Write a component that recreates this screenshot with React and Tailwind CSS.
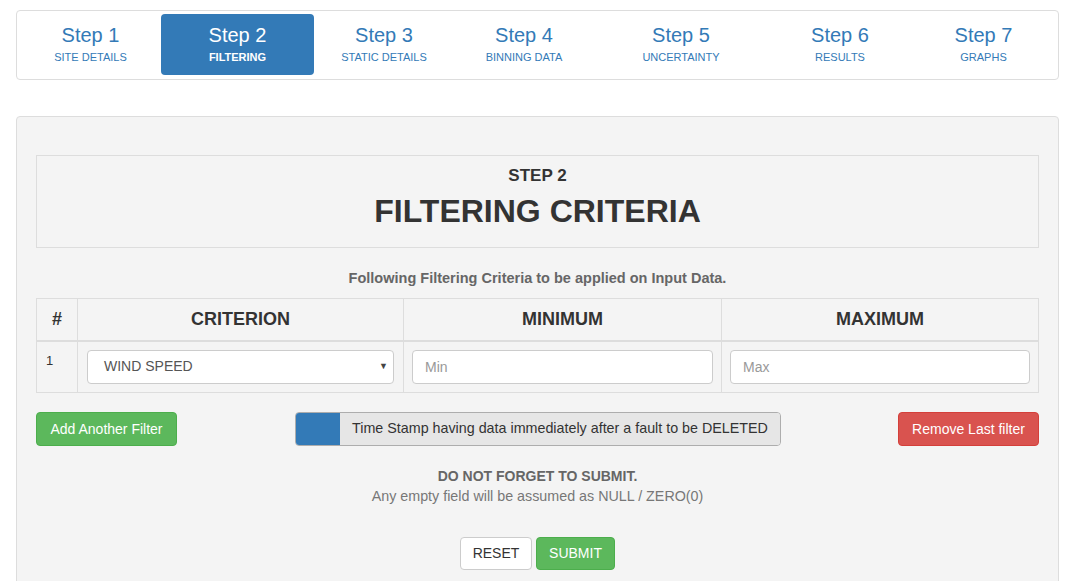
import React from 'react';

const steps = [
  { n: 1, label: 'SITE DETAILS', w: 'w-[141px]' },
  { n: 2, label: 'FILTERING', w: 'w-[153px]' },
  { n: 3, label: 'STATIC DETAILS', w: 'w-[140px]' },
  { n: 4, label: 'BINNING DATA', w: 'w-[140px]' },
  { n: 5, label: 'UNCERTAINTY', w: 'w-[174px]' },
  { n: 6, label: 'RESULTS', w: 'w-[144px]' },
  { n: 7, label: 'GRAPHS', w: 'flex-1' },
];

const StepNav = ({ active }) => (
  <div className="ml-4 mr-5 mt-[10px] flex h-[70px] rounded border border-[#ddd] bg-white px-[3px] pt-[3px] pb-[4px]">
    {steps.map((s) => {
      const isActive = s.n === active;
      return (
        <div
          key={s.n}
          className={`${s.w} flex flex-col items-center rounded pt-[8px] ${
            isActive ? 'bg-[#337ab7] text-white' : 'text-[#337ab7]'
          }`}
        >
          <div className="text-[20px] leading-[26px]">Step {s.n}</div>
          <div className={`text-[11px] leading-[14px] mt-[2px] ${isActive ? 'font-bold' : ''}`}>{s.label}</div>
        </div>
      );
    })}
  </div>
);

const App = () => {
  return (
    <div className="min-h-[581px] bg-white font-['Liberation_Sans',Arial,sans-serif] text-[#333] text-[14px]">
      <StepNav active={2} />

      <div className="ml-4 mr-5 mt-[36px] rounded border border-[#ddd] bg-[#f4f4f4] px-[19px] pt-[38px] pb-6">
        {/* heading */}
        <div className="flex h-[93px] flex-col items-center border border-[#ddd] pt-[10px]">
          <div className="text-[17px] font-bold leading-[20px]">STEP 2</div>
          <div className="mt-[5px] text-[32px] font-bold leading-[40px] text-[#333]">FILTERING CRITERIA</div>
        </div>

        <div className="mt-[21px] text-center text-[14.5px] font-bold leading-[18px] text-[#666]">
          Following Filtering Criteria to be applied on Input Data.
        </div>

        {/* table */}
        <table className="mt-[11px] w-full border-collapse border border-[#ddd]">
          <thead>
            <tr className="h-[42px]">
              <th className="w-[41px] border border-[#ddd] border-b-2 text-[18px] font-bold">#</th>
              <th className="w-[326px] border border-[#ddd] border-b-2 text-[18px] font-bold">CRITERION</th>
              <th className="w-[318px] border border-[#ddd] border-b-2 text-[18px] font-bold">MINIMUM</th>
              <th className="border border-[#ddd] border-b-2 text-[18px] font-bold">MAXIMUM</th>
            </tr>
          </thead>
          <tbody>
            <tr className="h-[52px]">
              <td className="border border-[#ddd] px-[9px] pt-[9px] align-top text-[13px]">1</td>
              <td className="border border-[#ddd] px-[9px]">
                <div className="relative flex h-[34px] items-center rounded border border-[#ccc] bg-white pl-4 text-[14px] text-[#555]">
                  WIND SPEED
                  <span className="absolute right-[5px] top-[9px] text-[9px] text-[#444]">▼</span>
                </div>
              </td>
              <td className="border border-[#ddd] px-[8px]">
                <input
                  placeholder="Min"
                  className="h-[34px] w-full rounded border border-[#ccc] bg-white px-3 text-[14px] text-[#555] placeholder:text-[#999] outline-none"
                />
              </td>
              <td className="border border-[#ddd] px-[8px]">
                <input
                  placeholder="Max"
                  className="h-[34px] w-full rounded border border-[#ccc] bg-white px-3 text-[14px] text-[#555] placeholder:text-[#999] outline-none"
                />
              </td>
            </tr>
          </tbody>
        </table>

        {/* actions */}
        <div className="mt-[19px] flex items-center justify-between">
          <button className="h-[34px] w-[141px] rounded border border-[#4cae4c] bg-[#5cb85c] text-[14px] text-white">
            Add Another Filter
          </button>
          <div className="ml-[118px] flex h-[34px] w-[486px] overflow-hidden rounded border border-[#adadad]">
            <div className="w-[44px] bg-[#337ab7]"></div>
            <div className="flex flex-1 items-center justify-center bg-[#e6e6e6] text-[14.3px] text-[#333]">
              Time Stamp having data immediately after a fault to be DELETED
            </div>
          </div>
          <div className="flex-1" />
          <button className="h-[34px] w-[141px] rounded border border-[#d43f3a] bg-[#d9534f] text-[14px] text-white">
            Remove Last filter
          </button>
        </div>

        <div className="mt-[20px] text-center leading-[20px]">
          <div className="text-[14px] font-bold text-[#666]">DO NOT FORGET TO SUBMIT.</div>
          <div className="text-[14.3px] text-[#777]">Any empty field will be assumed as NULL / ZERO(0)</div>
        </div>

        <div className="mt-[31px] flex justify-center gap-[4px]">
          <button className="h-[33px] w-[72px] rounded border border-[#ccc] bg-white text-[14px] text-[#333]">
            RESET
          </button>
          <button className="h-[33px] w-[79px] rounded border border-[#4cae4c] bg-[#5cb85c] text-[14px] text-white">
            SUBMIT
          </button>
        </div>
      </div>
    </div>
  );
};

export default App;
